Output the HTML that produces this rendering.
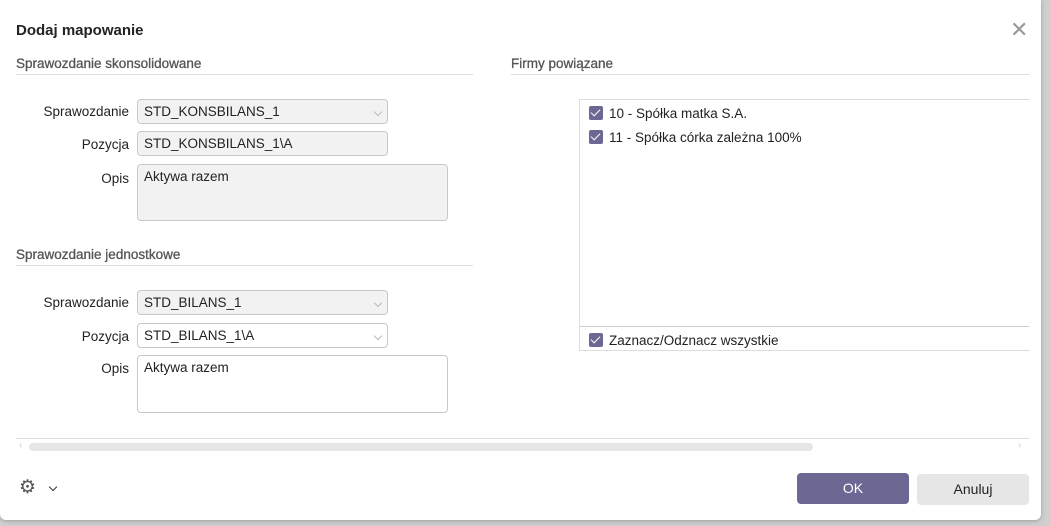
<!DOCTYPE html>
<html><head><meta charset="utf-8"><style>
*{box-sizing:border-box;margin:0;padding:0}
body{width:1050px;height:526px;background:#cfcfcf;font-family:"Liberation Sans",sans-serif;font-size:13.5px;color:#222;position:relative;overflow:hidden}
.dlg{position:absolute;left:0;top:0;width:1041px;height:520px;background:#fff;border-radius:0 0 6px 6px;box-shadow:0 1px 4px rgba(0,0,0,.25)}
.a{position:absolute}
.t{font-weight:bold;font-size:15px;left:16px;top:22px}
.sec{color:#555;font-size:13.5px;-webkit-text-stroke:0.3px #555}
.hr{height:1px;background:#dcdcdc}
.lbl{text-align:right;width:120px;left:9px}
.inp{border:1px solid #c8c8c8;border-radius:4px;background:#f2f2f2;padding:4px 6px;height:25px}
.w{background:#fff}
.cb{position:absolute;width:14px;height:14px;background:#6b6894;border-radius:2px}
.cb:after{content:"";position:absolute;left:4px;top:1px;width:4px;height:8px;border:solid #fff;border-width:0 1.5px 1.5px 0;transform:rotate(45deg)}
.chev{position:absolute;right:6px;top:9px;width:6px;height:6px;border:solid #bbb;border-width:0 1px 1px 0;transform:rotate(45deg)}
.btn{border-radius:4px;text-align:center;line-height:31px;height:31px;font-size:14px}
</style></head><body>
<div class="dlg">
<div class="a t">Dodaj mapowanie</div>
<div class="a" style="left:1010px;top:20px;font-size:22px;color:#999;line-height:20px">✕</div>

<div class="a sec" style="left:16px;top:56px">Sprawozdanie skonsolidowane</div>
<div class="a hr" style="left:16px;top:74px;width:457px"></div>
<div class="a lbl" style="top:104px">Sprawozdanie</div>
<div class="a inp" style="left:137px;top:99px;width:251px">STD_KONSBILANS_1<span class="chev"></span></div>
<div class="a lbl" style="top:137px">Pozycja</div>
<div class="a inp" style="left:137px;top:131px;width:251px">STD_KONSBILANS_1\A</div>
<div class="a lbl" style="top:171px">Opis</div>
<div class="a inp" style="left:137px;top:164px;width:311px;height:57px">Aktywa razem</div>

<div class="a sec" style="left:16px;top:247px">Sprawozdanie jednostkowe</div>
<div class="a hr" style="left:16px;top:265px;width:457px"></div>
<div class="a lbl" style="top:295px">Sprawozdanie</div>
<div class="a inp" style="left:137px;top:290px;width:251px">STD_BILANS_1<span class="chev"></span></div>
<div class="a lbl" style="top:329px">Pozycja</div>
<div class="a inp w" style="left:137px;top:323px;width:251px">STD_BILANS_1\A<span class="chev"></span></div>
<div class="a lbl" style="top:361px">Opis</div>
<div class="a inp w" style="left:137px;top:355px;width:311px;height:58px">Aktywa razem</div>

<div class="a sec" style="left:511px;top:56px">Firmy powiązane</div>
<div class="a hr" style="left:511px;top:74px;width:518px"></div>
<div class="a" style="left:579px;top:99px;width:451px;height:252px;border:1px solid #ddd;border-right:none"></div>
<div class="cb" style="left:589px;top:106px"></div><div class="a" style="left:609px;top:106px">10 - Spółka matka S.A.</div>
<div class="cb" style="left:589px;top:130px"></div><div class="a" style="left:609px;top:130px">11 - Spółka córka zależna 100%</div>
<div class="a hr" style="left:580px;top:326px;width:449px;background:#ccc"></div>
<div class="cb" style="left:589px;top:333px"></div><div class="a" style="left:609px;top:333px">Zaznacz/Odznacz wszystkie</div>

<div class="a hr" style="left:16px;top:438px;width:1013px"></div>
<div class="a" style="left:29px;top:443px;width:784px;height:8px;background:#e6e6e6;border-radius:4px"></div>
<div class="a" style="left:19px;top:440px;font-size:10px;color:#ccc">‹</div>
<div class="a" style="left:1018px;top:440px;font-size:10px;color:#ccc">›</div>

<div class="a" style="left:19px;top:476px;font-size:19px;color:#555">⚙</div>
<div class="a" style="left:50px;top:484px;width:6px;height:6px;border:solid #333;border-width:0 1px 1px 0;transform:rotate(45deg)"></div>
<div class="a btn" style="left:797px;top:473px;width:112px;background:#6b6894;color:#fff">OK</div>
<div class="a btn" style="left:917px;top:474px;width:112px;background:#e6e6e6;color:#222">Anuluj</div>
</div>
</body></html>
